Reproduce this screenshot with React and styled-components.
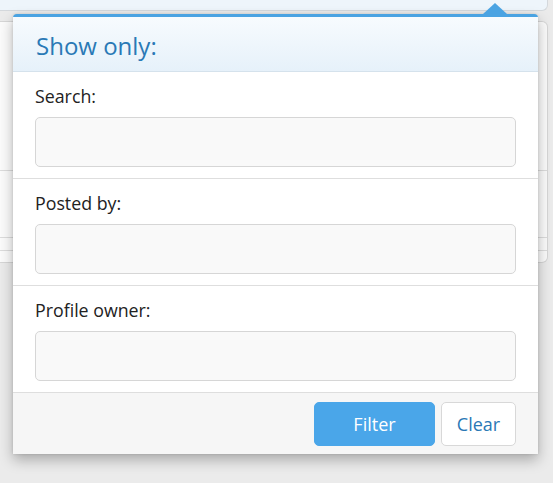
import React from "react";
import styled, { createGlobalStyle } from "styled-components";

const Global = createGlobalStyle`
  html, body { margin: 0; padding: 0; }
  body {
    background: #ebebeb;
    font-family: "Open Sans", "Noto Sans", sans-serif;
  }
`;

const Page = styled.div`
  position: relative;
  width: 553px;
  height: 483px;
  overflow: hidden;
  background: #ebebeb;
`;

const TopBar = styled.div`
  width: 547px;
  height: 10px;
  background: #eef5fb;
  border-bottom: 1px solid #d4d8dc;
  border-right: 1px solid #d4d8dc;
  border-radius: 0 0 6px 0;
`;

const Card = styled.div`
  margin-top: 10px;
  width: 547px;
  height: 240px;
  background: #fbfbfb;
  border: 1px solid #d6d6d6;
  border-left: none;
  border-radius: 0 6px 6px 0;
  display: flex;
  flex-direction: column;
`;

const CardRow = styled.div`
  height: ${(p) => p.$h}px;
  border-bottom: 1px solid #dcdcdc;
  flex-shrink: 0;
`;

const Popup = styled.div`
  position: absolute;
  left: 13px;
  top: 14px;
  width: 525px;
  background: #fff;
  border-top: 3px solid #4aa3e2;
  border-radius: 4px 4px 0 0;
  box-shadow: 0 6px 14px rgba(0, 0, 0, 0.28), 0 0 3px rgba(0, 0, 0, 0.12);
`;

const Arrow = styled.div`
  position: absolute;
  left: 470px;
  top: -14px;
  width: 0;
  height: 0;
  border-left: 12px solid transparent;
  border-right: 12px solid transparent;
  border-bottom: 11px solid #4aa3e2;
`;

const Header = styled.div`
  height: 54px;
  padding: 0 23px;
  display: flex;
  align-items: center;
  background: linear-gradient(to bottom, #f7fbfe 0%, #e6f1fa 100%);
  border-bottom: 1px solid #d5e2ec;
`;

const Title = styled.h2`
  margin: 0;
  font-weight: 400;
  font-size: 24px;
  color: #2a79b6;
  line-height: 30px;
  margin-top: 4px;
`;

const Section = styled.div`
  padding: 12px 22px 11px;
  border-bottom: 1px solid #dedede;
`;

const Label = styled.label`
  display: block;
  font-size: 17.8px;
  line-height: 24px;
  color: #222;
  margin-bottom: 9px;
`;

const Input = styled.input`
  display: block;
  box-sizing: border-box;
  width: 100%;
  height: 50px;
  background: #f9f9f9;
  border: 1px solid #d6d6d6;
  border-radius: 5px;
  padding: 0 10px;
  font-family: inherit;
  font-size: 16px;
  outline: none;
`;

const Footer = styled.div`
  background: #f6f6f6;
  padding: 9px 22px 8px;
  display: flex;
  justify-content: flex-end;
  gap: 6px;
`;

const Button = styled.button`
  box-sizing: border-box;
  height: 44px;
  width: ${(p) => p.$w}px;
  border-radius: 5px;
  font-family: inherit;
  font-size: 18px;
  cursor: pointer;
  background: ${(p) => (p.$primary ? "#4aa6e9" : "#fff")};
  color: ${(p) => (p.$primary ? "#fff" : "#2a78b5")};
  border: 1px solid ${(p) => (p.$primary ? "#4aa6e9" : "#d8d8d8")};
`;

const fields = ["Search:", "Posted by:", "Profile owner:"];

export default function App() {
  return (
    <>
      <Global />
      <Page>
        <TopBar />
        <Card>
          <CardRow $h={148} />
          <CardRow $h={66} />
          <CardRow $h={12} />
        </Card>
        <Popup>
          <Arrow />
          <Header>
            <Title>Show only:</Title>
          </Header>
          {fields.map((f) => (
            <Section key={f}>
              <Label>{f}</Label>
              <Input type="text" />
            </Section>
          ))}
          <Footer>
            <Button $primary $w={121}>Filter</Button>
            <Button $w={75}>Clear</Button>
          </Footer>
        </Popup>
      </Page>
    </>
  );
}
